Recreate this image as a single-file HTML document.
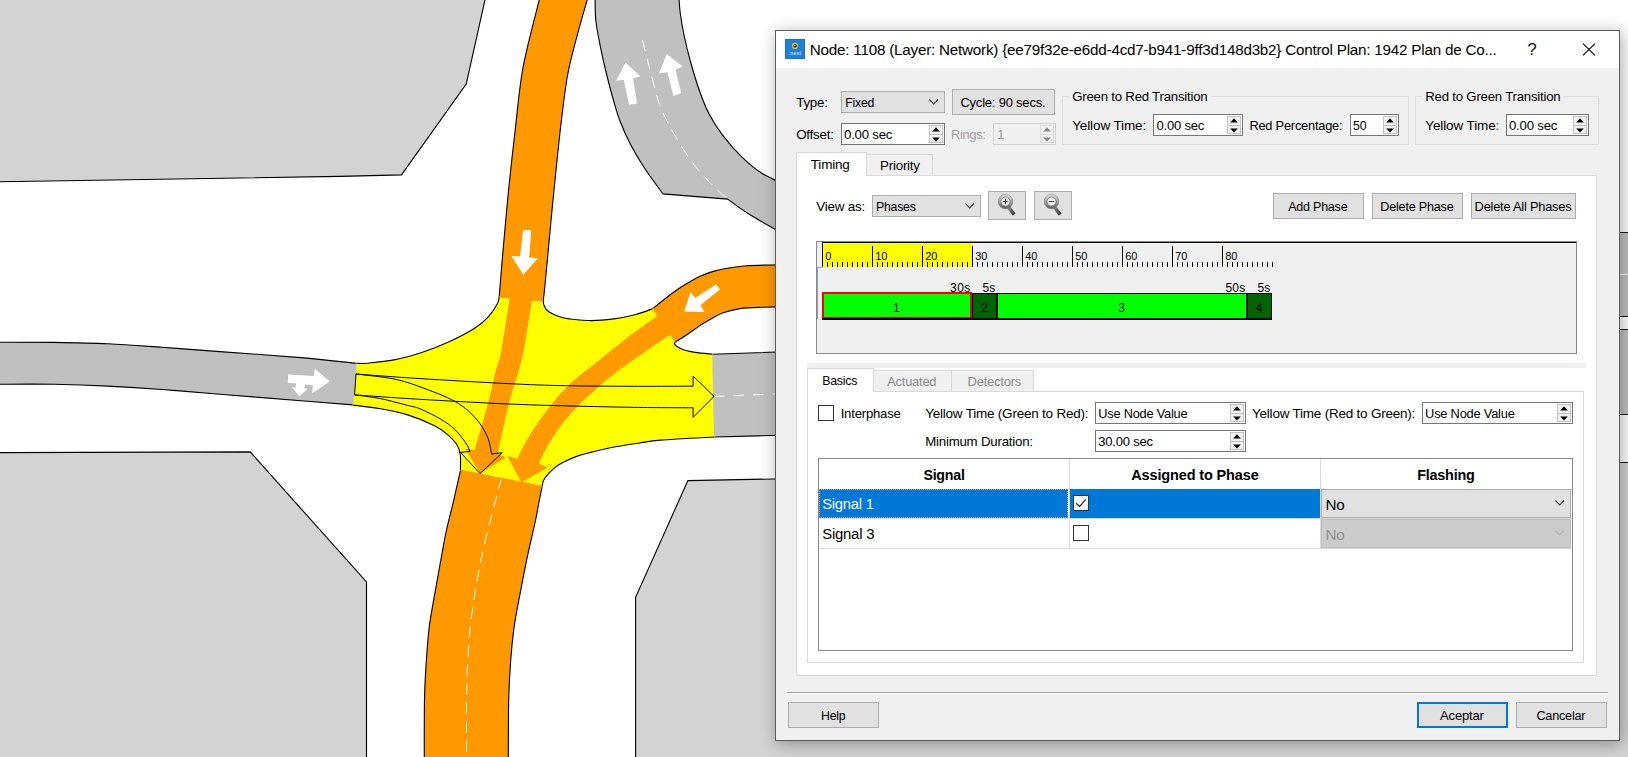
<!DOCTYPE html>
<html><head><meta charset="utf-8"><title>Node 1108 Control Plan</title>
<style>
html,body{margin:0;padding:0;}
body{width:1628px;height:757px;overflow:hidden;position:relative;background:#fff;font-family:"Liberation Sans", sans-serif;}
#map{position:absolute;left:0;top:0;}
#ui div,#ui svg{position:absolute;box-sizing:border-box;}
#ui .t{box-sizing:content-box;}
</style></head>
<body>
<svg id="map" width="1628" height="757" viewBox="0 0 1628 757">
<rect width="1628" height="757" fill="#fff"/>
<path d="M-5,-5 L486,-5 L485.4,-2 L466.2,84.1 L401.5,174.9 L340,176.4 L-5,181.85 Z" fill="#d3d3d3" stroke="#000" stroke-width="1.12"/>
<path d="M-5,452.6 L250.2,451.9 L366.5,582 L366.5,765 L-5,765 Z" fill="#d3d3d3" stroke="#000" stroke-width="1.12"/>
<path d="M687.9,480.6 L800,478.5 L1640,478.5 L1640,760 L635.6,760 L635.6,597.3 Z" fill="#d3d3d3" stroke="#000" stroke-width="1.12"/>
<rect x="1618" y="232.5" width="20" height="84" fill="#c0c0c0"/>
<rect x="1618" y="329.5" width="20" height="85" fill="#c0c0c0"/>
<rect x="1618" y="462.5" width="20" height="300" fill="#d3d3d3"/>
<path d="M1618,232.5h20M1618,316.5h20M1618,329.5h20M1618,414.5h20M1618,462.5h20" stroke="#1a1a1a" stroke-width="1" fill="none"/>
<path d="M1620,274.3h10" stroke="#fff" stroke-width="1" fill="none"/>
<path d="M-5.0,342.2 C4.8,342.2 35.2,342.1 54.0,342.4 C72.8,342.7 90.0,343.0 108.0,343.8 C126.0,344.6 143.3,346.0 162.0,347.3 C180.7,348.6 196.8,349.9 220.0,351.6 C243.2,353.3 278.2,355.7 301.0,357.6 C323.8,359.6 347.2,362.4 356.5,363.3 L353.1,404.9 C344.4,404.2 323.2,402.6 301.0,400.8 C278.8,399.0 243.2,396.1 220.0,394.2 C196.8,392.3 180.7,390.9 162.0,389.5 C143.3,388.1 126.0,387.0 108.0,386.1 C90.0,385.2 72.8,384.6 54.0,384.3 C35.2,384.0 4.8,384.3 -5.0,384.3 Z" fill="#c0c0c0"/>
<path d="M-5.0,342.2 C4.8,342.2 35.2,342.1 54.0,342.4 C72.8,342.7 90.0,343.0 108.0,343.8 C126.0,344.6 143.3,346.0 162.0,347.3 C180.7,348.6 196.8,349.9 220.0,351.6 C243.2,353.3 278.2,355.7 301.0,357.6 C323.8,359.6 347.2,362.4 356.5,363.3" fill="none" stroke="#000" stroke-width="1.12"/>
<path d="M-5.0,384.3 C4.8,384.3 35.2,384.0 54.0,384.3 C72.8,384.6 90.0,385.2 108.0,386.1 C126.0,387.0 143.3,388.1 162.0,389.5 C180.7,390.9 196.8,392.3 220.0,394.2 C243.2,396.1 278.8,399.0 301.0,400.8 C323.2,402.6 344.4,404.2 353.1,404.9" fill="none" stroke="#000" stroke-width="1.12"/>
<path d="M712.7,354.2 C727.2,353.7 785.5,351.7 800.0,351.2 L800.0,434.8 C785.7,435.2 728.7,436.6 714.4,437.0 Z" fill="#c0c0c0"/>
<path d="M712.7,354.2 C727.2,353.7 785.5,351.7 800.0,351.2" fill="none" stroke="#000" stroke-width="1.12"/>
<path d="M714.4,437.0 C728.7,436.6 785.7,435.2 800.0,434.8" fill="none" stroke="#000" stroke-width="1.12"/>
<path d="M714,396.4 L800,393" stroke="#fff" stroke-width="1" stroke-dasharray="10.5 9" fill="none"/>
<path d="M595.1,-3.0 C595.2,0.9 594.9,11.9 595.8,20.3 C596.7,28.7 598.6,37.8 600.5,47.3 C602.4,56.8 605.0,67.9 607.3,77.0 C609.5,86.1 611.9,94.7 614.0,102.0 C616.1,109.3 617.3,114.0 620.0,121.0 C622.7,128.0 626.3,136.3 630.3,144.0 C634.3,151.7 638.4,158.7 643.8,167.0 C649.2,175.3 659.7,189.4 662.9,193.9 L727.7,199.1 C731.8,201.9 740.1,208.7 752.1,216.0 C764.1,223.3 792.0,238.5 800.0,243.0 L800,192 C793.8,189.0 772.3,179.5 762.7,173.8 C753.1,168.1 749.1,164.1 742.4,157.6 C735.6,151.1 727.8,142.0 722.2,134.6 C716.6,127.2 712.4,120.4 708.6,113.0 C704.8,105.6 702.1,98.2 699.2,90.0 C696.3,81.8 693.5,72.4 691.0,63.5 C688.5,54.6 686.1,44.8 684.3,36.5 C682.5,28.2 681.2,20.1 680.3,13.5 C679.4,6.9 679.1,-0.2 678.9,-3.0 Z" fill="#c0c0c0"/>
<path d="M595.1,-3.0 C595.2,0.9 594.9,11.9 595.8,20.3 C596.7,28.7 598.6,37.8 600.5,47.3 C602.4,56.8 605.0,67.9 607.3,77.0 C609.5,86.1 611.9,94.7 614.0,102.0 C616.1,109.3 617.3,114.0 620.0,121.0 C622.7,128.0 626.3,136.3 630.3,144.0 C634.3,151.7 638.4,158.7 643.8,167.0 C649.2,175.3 659.7,189.4 662.9,193.9 L727.7,199.1 C731.8,201.9 740.1,208.7 752.1,216.0 C764.1,223.3 792.0,238.5 800.0,243.0" fill="none" stroke="#000" stroke-width="1.12"/>
<path d="M678.9,-3.0 C679.1,-0.2 679.4,6.9 680.3,13.5 C681.2,20.1 682.5,28.2 684.3,36.5 C686.1,44.8 688.5,54.6 691.0,63.5 C693.5,72.4 696.3,81.8 699.2,90.0 C702.1,98.2 704.8,105.6 708.6,113.0 C712.4,120.4 716.6,127.2 722.2,134.6 C727.8,142.0 735.6,151.1 742.4,157.6 C749.1,164.1 753.1,168.1 762.7,173.8 C772.3,179.5 793.8,189.0 800.0,192.0" fill="none" stroke="#000" stroke-width="1.12"/>
<path d="M642.4,39.9 C643.7,44.9 647.3,59.6 650.0,70.0 C652.7,80.3 655.8,93.5 658.6,102.0 C661.4,110.5 663.5,114.1 667.0,121.0 C670.5,127.9 674.8,135.7 679.6,143.4 C684.4,151.1 689.5,159.2 695.8,167.0 C702.1,174.8 712.2,184.9 717.4,190.0 C722.6,195.1 725.4,196.3 727.0,197.6" fill="none" stroke="#fff" stroke-width="1" stroke-dasharray="11.5 7.5"/>
<path d="M540.0,-3.0 C537.2,8.6 527.2,45.1 523.2,66.5 C519.2,87.9 518.1,104.9 515.7,125.5 C513.3,146.1 510.7,169.1 508.6,190.0 C506.5,210.9 504.6,233.2 503.0,251.0 C501.4,268.8 499.8,289.3 499.2,297.0 L543.2,301.0 C543.5,298.3 543.8,297.5 545.0,285.0 C546.2,272.5 549.0,241.8 550.5,226.0 C552.0,210.2 552.3,206.8 554.0,190.0 C555.7,173.2 558.5,144.7 560.8,125.5 C563.1,106.3 564.8,90.3 567.6,75.0 C570.4,59.7 574.2,46.8 577.6,33.8 C581.0,20.8 586.3,3.1 588.0,-3.0 Z" fill="#ff9900"/>
<path d="M540.0,-3.0 C537.2,8.6 527.2,45.1 523.2,66.5 C519.2,87.9 518.1,104.9 515.7,125.5 C513.3,146.1 510.7,169.1 508.6,190.0 C506.5,210.9 504.6,233.2 503.0,251.0 C501.4,268.8 499.8,289.3 499.2,297.0" fill="none" stroke="#000" stroke-width="1.12"/>
<path d="M588.0,-3.0 C586.3,3.1 581.0,20.8 577.6,33.8 C574.2,46.8 570.4,59.7 567.6,75.0 C564.8,90.3 563.1,106.3 560.8,125.5 C558.5,144.7 555.7,173.2 554.0,190.0 C552.3,206.8 552.0,210.2 550.5,226.0 C549.0,241.8 546.2,272.5 545.0,285.0 C543.8,297.5 543.5,298.3 543.2,301.0" fill="none" stroke="#000" stroke-width="1.12"/>
<path d="M652.8,308.6 C654.6,307.1 660.0,302.7 663.8,299.7 C667.6,296.7 671.7,293.6 675.7,290.8 C679.7,288.0 683.6,285.5 687.6,283.1 C691.6,280.7 694.8,278.6 699.5,276.5 C704.2,274.4 708.3,272.4 716.1,270.6 C723.9,268.8 732.4,266.8 746.4,265.8 C760.4,264.8 791.1,264.8 800.0,264.6 L800.0,306.6 C793.3,306.7 770.0,307.0 760.0,307.3 C750.0,307.6 746.1,307.7 740.0,308.6 C733.9,309.5 728.0,311.1 723.2,312.8 C718.4,314.5 715.2,316.6 711.3,318.8 C707.3,321.0 703.5,323.3 699.5,325.9 C695.5,328.5 691.6,331.5 687.6,334.2 C683.6,336.9 677.6,340.6 675.6,341.9 Z" fill="#ff9900"/>
<path d="M652.8,308.6 C654.6,307.1 660.0,302.7 663.8,299.7 C667.6,296.7 671.7,293.6 675.7,290.8 C679.7,288.0 683.6,285.5 687.6,283.1 C691.6,280.7 694.8,278.6 699.5,276.5 C704.2,274.4 708.3,272.4 716.1,270.6 C723.9,268.8 732.4,266.8 746.4,265.8 C760.4,264.8 791.1,264.8 800.0,264.6" fill="none" stroke="#000" stroke-width="1.12"/>
<path d="M675.6,341.9 C677.6,340.6 683.6,336.9 687.6,334.2 C691.6,331.5 695.5,328.5 699.5,325.9 C703.5,323.3 707.3,321.0 711.3,318.8 C715.2,316.6 718.4,314.5 723.2,312.8 C728.0,311.1 733.9,309.5 740.0,308.6 C746.1,307.7 750.0,307.6 760.0,307.3 C770.0,307.0 793.3,306.7 800.0,306.6" fill="none" stroke="#000" stroke-width="1.12"/>
<path d="M460.5,470.3 C459.3,475.6 455.6,492.1 453.3,502.0 C451.0,511.9 448.4,521.5 446.5,530.0 C444.6,538.5 443.9,543.2 442.1,553.2 C440.3,563.2 437.6,577.6 435.5,589.8 C433.4,602.0 430.9,614.2 429.3,626.4 C427.8,638.6 427.0,650.8 426.2,663.0 C425.4,675.2 424.8,683.4 424.5,699.6 C424.2,715.8 424.3,749.9 424.3,760.0 L508.3,760.0 C508.4,749.9 508.3,715.8 508.7,699.6 C509.1,683.4 509.6,675.2 510.5,663.0 C511.4,650.8 512.5,638.6 514.2,626.4 C515.9,614.2 518.5,602.0 520.8,589.8 C523.1,577.6 525.6,564.8 528.1,553.2 C530.6,541.6 533.8,528.5 535.6,520.0 C537.4,511.5 537.9,507.6 539.0,502.0 C540.1,496.4 541.6,489.1 542.1,486.5 Z" fill="#ff9900"/>
<path d="M460.5,470.3 C459.3,475.6 455.6,492.1 453.3,502.0 C451.0,511.9 448.4,521.5 446.5,530.0 C444.6,538.5 443.9,543.2 442.1,553.2 C440.3,563.2 437.6,577.6 435.5,589.8 C433.4,602.0 430.9,614.2 429.3,626.4 C427.8,638.6 427.0,650.8 426.2,663.0 C425.4,675.2 424.8,683.4 424.5,699.6 C424.2,715.8 424.3,749.9 424.3,760.0" fill="none" stroke="#000" stroke-width="1.12"/>
<path d="M542.1,486.5 C541.6,489.1 540.1,496.4 539.0,502.0 C537.9,507.6 537.4,511.5 535.6,520.0 C533.8,528.5 530.6,541.6 528.1,553.2 C525.6,564.8 523.1,577.6 520.8,589.8 C518.5,602.0 515.9,614.2 514.2,626.4 C512.5,638.6 511.4,650.8 510.5,663.0 C509.6,675.2 509.1,683.4 508.7,699.6 C508.3,715.8 508.4,749.9 508.3,760.0" fill="none" stroke="#000" stroke-width="1.12"/>
<path d="M501.5,477.7 C499.8,484.1 494.7,503.4 491.5,516.0 C488.3,528.6 485.1,540.9 482.4,553.2 C479.7,565.5 477.5,577.8 475.5,590.0 C473.5,602.2 471.6,614.2 470.3,626.4 C469.0,638.6 468.2,650.7 467.6,663.0 C467.0,675.3 466.8,683.8 466.6,700.0 C466.4,716.2 466.6,750.0 466.6,760.0" fill="none" stroke="#fff" stroke-width="1" stroke-dasharray="11.5 7.5"/>
<path d="M356.5,363.3 C358.2,363.3 360.8,363.8 367.0,363.2 C373.2,362.6 385.0,361.6 394.0,359.9 C403.0,358.2 412.0,355.7 421.0,352.8 C430.0,349.9 439.0,346.4 448.0,342.3 C457.0,338.2 468.2,332.3 475.0,328.0 C481.8,323.7 484.9,320.6 488.6,316.6 C492.3,312.6 495.6,307.1 497.4,303.8 C499.2,300.5 498.9,298.1 499.2,297.0 L543.2,301.0 C543.3,301.7 543.3,303.5 543.9,305.0 C544.5,306.5 545.4,308.6 546.8,310.0 C548.1,311.4 549.8,312.4 552.0,313.5 C554.2,314.6 557.1,315.9 560.0,316.8 C562.9,317.7 564.2,318.3 569.5,318.9 C574.8,319.5 584.2,320.6 591.6,320.6 C599.0,320.6 606.3,319.9 613.7,318.9 C621.1,317.9 629.3,316.2 635.8,314.5 C642.3,312.8 650.0,309.6 652.8,308.6 L675.6,341.7 C675.4,342.1 673.6,343.1 674.6,344.3 C675.6,345.5 678.2,347.6 681.6,349.0 C685.0,350.4 689.9,351.5 695.1,352.4 C700.3,353.3 709.8,353.9 712.7,354.2 L714.4,437.0 C705.4,437.5 672.9,439.1 660.5,440.1 C648.1,441.1 648.5,441.7 640.0,443.0 C631.5,444.3 617.1,446.5 609.2,448.0 C601.3,449.5 597.6,450.6 592.5,451.9 C587.4,453.2 583.2,454.0 578.6,455.6 C574.0,457.2 568.6,459.7 564.8,461.6 C560.9,463.5 558.3,465.0 555.5,467.1 C552.7,469.2 550.1,471.9 548.1,474.1 C546.1,476.3 544.5,478.4 543.5,480.5 C542.5,482.6 542.3,485.5 542.1,486.5 L460.5,470.3 C460.4,467.6 460.9,458.4 460.2,454.0 C459.5,449.6 458.5,447.1 456.5,444.0 C454.5,440.9 451.8,438.2 448.1,435.1 C444.5,432.1 441.4,429.1 434.6,425.7 C427.9,422.3 416.6,417.7 407.6,414.9 C398.6,412.1 389.6,410.4 380.5,408.8 C371.4,407.2 357.7,405.7 353.1,405.1 Z" fill="#ffff00"/>
<path d="M356.5,363.3 C358.2,363.3 360.8,363.8 367.0,363.2 C373.2,362.6 385.0,361.6 394.0,359.9 C403.0,358.2 412.0,355.7 421.0,352.8 C430.0,349.9 439.0,346.4 448.0,342.3 C457.0,338.2 468.2,332.3 475.0,328.0 C481.8,323.7 484.9,320.6 488.6,316.6 C492.3,312.6 495.6,307.1 497.4,303.8 C499.2,300.5 498.9,298.1 499.2,297.0" fill="none" stroke="#000" stroke-width="1.12"/>
<path d="M543.2,301.0 C543.3,301.7 543.3,303.5 543.9,305.0 C544.5,306.5 545.4,308.6 546.8,310.0 C548.1,311.4 549.8,312.4 552.0,313.5 C554.2,314.6 557.1,315.9 560.0,316.8 C562.9,317.7 564.2,318.3 569.5,318.9 C574.8,319.5 584.2,320.6 591.6,320.6 C599.0,320.6 606.3,319.9 613.7,318.9 C621.1,317.9 629.3,316.2 635.8,314.5 C642.3,312.8 650.0,309.6 652.8,308.6" fill="none" stroke="#000" stroke-width="1.12"/>
<path d="M675.6,341.7 C675.4,342.1 673.6,343.1 674.6,344.3 C675.6,345.5 678.2,347.6 681.6,349.0 C685.0,350.4 689.9,351.5 695.1,352.4 C700.3,353.3 709.8,353.9 712.7,354.2" fill="none" stroke="#000" stroke-width="1.12"/>
<path d="M714.4,437.0 C705.4,437.5 672.9,439.1 660.5,440.1 C648.1,441.1 648.5,441.7 640.0,443.0 C631.5,444.3 617.1,446.5 609.2,448.0 C601.3,449.5 597.6,450.6 592.5,451.9 C587.4,453.2 583.2,454.0 578.6,455.6 C574.0,457.2 568.6,459.7 564.8,461.6 C560.9,463.5 558.3,465.0 555.5,467.1 C552.7,469.2 550.1,471.9 548.1,474.1 C546.1,476.3 544.5,478.4 543.5,480.5 C542.5,482.6 542.3,485.5 542.1,486.5" fill="none" stroke="#000" stroke-width="1.12"/>
<path d="M460.5,470.3 C460.4,467.6 460.9,458.4 460.2,454.0 C459.5,449.6 458.5,447.1 456.5,444.0 C454.5,440.9 451.8,438.2 448.1,435.1 C444.5,432.1 441.4,429.1 434.6,425.7 C427.9,422.3 416.6,417.7 407.6,414.9 C398.6,412.1 389.6,410.4 380.5,408.8 C371.4,407.2 357.7,405.7 353.1,405.1" fill="none" stroke="#000" stroke-width="1.12"/>
<path d="M499.4,296.6 L543,300.6 M653,308.4 L675.4,341.5 M460.7,470.5 L541.9,486.6" stroke="#ff9900" stroke-width="1.6" fill="none"/>
<path d="M356.2,363.6 L352.9,404.7 M712.9,354.5 L714.6,436.7" stroke="#c0c0c0" stroke-width="1.4" fill="none"/>
<path d="M509.9,296.5 C508.5,305.4 503.9,337.4 501.5,350.0 C499.1,362.6 497.5,363.7 495.4,372.0 C493.3,380.3 492.3,387.0 488.9,400.0 C485.4,413.0 477.1,441.7 474.7,450.0 L465.3,448.6 L480.1,473.6 L505.8,457.4 L497.7,453.4 C499.7,444.5 506.4,413.6 509.9,400.0 C513.4,386.4 516.1,380.3 518.4,372.0 C520.7,363.7 521.5,362.2 523.8,350.0 C526.1,337.8 530.8,307.5 532.2,299.0 Z" fill="#ff9900"/>
<path d="M658.8,314.8 C653.6,318.6 637.3,330.2 627.6,337.6 C617.9,345.0 609.5,352.0 600.5,359.2 C591.5,366.4 581.1,374.0 573.5,380.8 C565.9,387.6 560.4,393.9 555.1,400.0 C549.8,406.1 546.1,411.3 541.6,417.6 C537.1,423.9 532.2,430.9 528.1,437.8 C524.0,444.7 519.1,455.3 517.3,458.8 L507.2,456.1 L521.4,482.4 L547.7,467.6 L538.9,463.5 C540.5,460.4 544.6,451.1 548.4,444.6 C552.2,438.1 556.6,431.1 561.9,424.3 C567.2,417.5 571.6,412.2 580.3,403.8 C589.0,395.4 598.8,385.7 614.0,374.0 C629.2,362.3 661.8,340.5 671.3,333.8 Z" fill="#ff9900"/>
<path d="M523.1,229.9 L531.2,230.3 L529.2,257.4 L537.9,258.2 L523.3,274.7 L511.3,256.1 L520.1,256.5 Z" fill="#fff"/>
<path d="M684.2,311.4 L690.5,292 L695.3,297.9 L716.1,284.3 L719.9,289.6 L700.6,305.1 L704.4,311.9 Z" fill="#fff"/>
<path d="M625.5,62.4 L640.4,76.4 L633,78.1 L637,103.5 L628.9,104.8 L623.9,79.7 L616.1,80.8 Z" fill="#fff"/>
<path d="M666.8,54.1 L682.7,66.6 L675.5,69.6 L681.2,93.2 L673.5,95.9 L667.4,72.3 L658.9,73.4 Z" fill="#fff"/>
<path d="M288.2,374.4 L313.7,376.1 L314.9,368.8 L329.8,381.6 L312.1,393.3 L312.9,385.2 L304.9,384.4 L304.3,388.3 L307.6,388.8 L299.3,396.6 L292.1,387.2 L295.7,387.5 L296,383.6 L287.7,382.7 Z" fill="#fff"/>
<path d="M356.0,374.0 C366.7,374.8 396.0,377.1 420.0,378.6 C444.0,380.1 476.7,382.0 500.0,383.2 C523.3,384.4 538.3,385.1 560.0,385.6 C581.7,386.1 607.8,386.2 630.0,386.3 C652.2,386.4 682.6,386.2 693.1,386.2 L693.1,376.1 L714,396.4 L693.1,417.3 L693.1,407.8 C682.6,407.7 652.2,407.7 630.0,407.3 C607.8,406.9 581.7,406.3 560.0,405.7 C538.3,405.1 523.3,404.7 500.0,403.6 C476.7,402.5 444.2,400.8 420.0,399.3 C395.8,397.9 365.5,395.6 354.6,394.9 Z" fill="none" stroke="#000" stroke-width="1"/>
<path d="M356.0,374.0 C362.3,374.8 383.2,376.8 394.0,379.0 C404.8,381.2 410.9,383.5 421.0,387.2 C431.1,390.9 445.9,396.3 454.9,401.4 C463.9,406.5 469.7,411.8 475.1,417.6 C480.5,423.5 484.6,430.4 487.3,436.5 C490.1,442.6 490.9,451.1 491.6,454.0 L502.2,452.7 L480.1,473.6 L460.5,452.4 L470,451.4 C469.3,450.0 468.4,446.8 465.9,443.2 C463.4,439.6 459.4,433.8 455.1,429.7 C450.8,425.6 446.2,422.4 440.3,418.9 C434.4,415.4 425.4,411.1 420.0,408.8 C414.6,406.6 414.2,407.1 407.6,405.4 C401.0,403.7 389.3,400.4 380.5,398.6 C371.7,396.9 358.9,395.5 354.6,394.9" fill="none" stroke="#000" stroke-width="1"/>
</svg>
<div id="ui">
<div style="left:775px;top:30px;width:845px;height:711px;background:#f0f0f0;border:1px solid #5c5c5c;box-shadow:1.5px 3px 16px 0 rgba(0,0,0,.33);"></div>
<div style="left:776px;top:31px;width:843px;height:37px;background:#fff;"></div>
<div style="left:785px;top:39px;width:20px;height:20px;background:#2080d8;border:1px solid #0f74d4;"></div>
<svg style="left:785px;top:39px;" width="20" height="20" viewBox="0 0 20 20"><circle cx="10" cy="6.9" r="3.1" fill="#f5b800"/><circle cx="10.1" cy="7" r="1.8" fill="#1a2f6a"/><circle cx="9.7" cy="6.6" r=".8" fill="#b9d4f2"/></svg>
<div class="t" style="left:788.6px;top:48.00px;font-size:5.4px;line-height:10px;color:#e4eefa;white-space:nowrap;letter-spacing:0.178px;">.next</div>
<div class="t" style="left:809.8px;top:39.00px;font-size:15.23px;line-height:21px;color:#000;white-space:nowrap;letter-spacing:-0.22px;">Node: 1108 (Layer: Network) {ee79f32e-e6dd-4cd7-b941-9ff3d148d3b2} Control Plan: 1942 Plan de Co...</div>
<div class="t" style="left:1382px;width:300px;text-align:center;top:38.00px;font-size:17px;line-height:23px;color:#151515;white-space:nowrap;">?</div>
<svg style="left:1582px;top:42.5px;" width="14" height="13" viewBox="0 0 14 13"><path d="M1,0.7 L13,12.3 M13,0.7 L1,12.3" stroke="#000" stroke-width="1.1" fill="none"/></svg>
<div class="t" style="left:796.2px;top:93.00px;font-size:13.36px;line-height:19px;color:#000;white-space:nowrap;letter-spacing:-0.22px;">Type:</div>
<div style="left:841px;top:91px;width:104px;height:22px;background:#e1e1e1;border:1px solid #adadad;"></div>
<div class="t" style="left:845.2px;top:94.00px;font-size:12.3px;line-height:18px;color:#000;white-space:nowrap;letter-spacing:-0.22px;">Fixed</div>
<svg style="left:928.8px;top:99.1px;" width="10" height="6" viewBox="0 0 10 6"><path d="M0.4,0.5 L4.7,4.9 L9,0.5" fill="none" stroke="#444" stroke-width="1.1"/></svg>
<div style="left:952px;top:89px;width:103px;height:26px;background:#e1e1e1;border:1px solid #adadad;"></div>
<div class="t" style="left:960.4px;top:93.00px;font-size:13px;line-height:19px;color:#000;white-space:nowrap;letter-spacing:-0.211px;">Cycle: 90 secs.</div>
<div class="t" style="left:796.2px;top:125.00px;font-size:13.36px;line-height:19px;color:#000;white-space:nowrap;letter-spacing:-0.22px;">Offset:</div>
<div style="left:841px;top:123px;width:104px;height:22px;background:#fff;border:1px solid #767676;"></div>
<div class="t" style="left:844px;top:125.00px;font-size:13.23px;line-height:19px;color:#000;white-space:nowrap;letter-spacing:-0.22px;">0.00 sec</div>
<div style="left:929px;top:125px;width:14px;height:18px;background:#f0f0f0;border:1px solid #c3c3c3;"></div>
<div style="left:929px;top:133.5px;width:14px;height:1px;background:#c3c3c3;"></div>
<svg style="left:931.6px;top:127.3px;" width="8" height="5" viewBox="0 0 8 5"><path d="M0.2,4.4 L4,0.3 L7.8,4.4 Z" fill="#000"/></svg>
<svg style="left:931.6px;top:136.6px;" width="8" height="5" viewBox="0 0 8 5"><path d="M0.2,0.4 L4,4.5 L7.8,0.4 Z" fill="#000"/></svg>
<div class="t" style="left:951px;top:126.00px;font-size:12.7px;line-height:18px;color:#9d9d9d;white-space:nowrap;letter-spacing:-0.22px;">Rings:</div>
<div style="left:993px;top:123px;width:63px;height:22px;background:#f0f0f0;border:1px solid #d4d4d4;"></div>
<div class="t" style="left:997px;top:125.00px;font-size:13.5px;line-height:19px;color:#9d9d9d;white-space:nowrap;">1</div>
<div style="left:1040px;top:125px;width:14px;height:18px;background:#f0f0f0;border:1px solid #dcdcdc;"></div>
<div style="left:1040px;top:133.5px;width:14px;height:1px;background:#dcdcdc;"></div>
<svg style="left:1042.6px;top:127.3px;" width="8" height="5" viewBox="0 0 8 5"><path d="M0.2,4.4 L4,0.3 L7.8,4.4 Z" fill="#858585"/></svg>
<svg style="left:1042.6px;top:136.6px;" width="8" height="5" viewBox="0 0 8 5"><path d="M0.2,0.4 L4,4.5 L7.8,0.4 Z" fill="#858585"/></svg>
<div style="left:1062px;top:96px;width:347px;height:49px;border:1px solid #dcdcdc;"></div>
<div style="left:1069.2px;top:88px;width:141.5px;height:16px;background:#f0f0f0;"></div>
<div class="t" style="left:1072.2px;top:87.00px;font-size:13.22px;line-height:19px;color:#000;white-space:nowrap;letter-spacing:-0.22px;">Green to Red Transition</div>
<div class="t" style="left:1072.2px;top:116.00px;font-size:13.5px;line-height:19px;color:#000;white-space:nowrap;letter-spacing:-0.118px;">Yellow Time:</div>
<div style="left:1153px;top:114px;width:90px;height:22px;background:#fff;border:1px solid #767676;"></div>
<div class="t" style="left:1156.5px;top:116.00px;font-size:13.05px;line-height:19px;color:#000;white-space:nowrap;letter-spacing:-0.22px;">0.00 sec</div>
<div style="left:1227px;top:116px;width:14px;height:18px;background:#f0f0f0;border:1px solid #c3c3c3;"></div>
<div style="left:1227px;top:124.5px;width:14px;height:1px;background:#c3c3c3;"></div>
<svg style="left:1229.6px;top:118.3px;" width="8" height="5" viewBox="0 0 8 5"><path d="M0.2,4.4 L4,0.3 L7.8,4.4 Z" fill="#000"/></svg>
<svg style="left:1229.6px;top:127.6px;" width="8" height="5" viewBox="0 0 8 5"><path d="M0.2,0.4 L4,4.5 L7.8,0.4 Z" fill="#000"/></svg>
<div class="t" style="left:1249.4px;top:116.00px;font-size:12.84px;line-height:19px;color:#000;white-space:nowrap;letter-spacing:-0.22px;">Red Percentage:</div>
<div style="left:1350px;top:114px;width:49px;height:22px;background:#fff;border:1px solid #767676;"></div>
<div class="t" style="left:1353px;top:117.00px;font-size:12.32px;line-height:18px;color:#000;white-space:nowrap;letter-spacing:-0.22px;">50</div>
<div style="left:1383px;top:116px;width:14px;height:18px;background:#f0f0f0;border:1px solid #c3c3c3;"></div>
<div style="left:1383px;top:124.5px;width:14px;height:1px;background:#c3c3c3;"></div>
<svg style="left:1385.6px;top:118.3px;" width="8" height="5" viewBox="0 0 8 5"><path d="M0.2,4.4 L4,0.3 L7.8,4.4 Z" fill="#000"/></svg>
<svg style="left:1385.6px;top:127.6px;" width="8" height="5" viewBox="0 0 8 5"><path d="M0.2,0.4 L4,4.5 L7.8,0.4 Z" fill="#000"/></svg>
<div style="left:1415px;top:96px;width:184px;height:49px;border:1px solid #dcdcdc;"></div>
<div style="left:1422.3px;top:88px;width:141.4px;height:16px;background:#f0f0f0;"></div>
<div class="t" style="left:1425.3px;top:87.00px;font-size:13.21px;line-height:19px;color:#000;white-space:nowrap;letter-spacing:-0.22px;">Red to Green Transition</div>
<div class="t" style="left:1425.3px;top:116.00px;font-size:13.5px;line-height:19px;color:#000;white-space:nowrap;letter-spacing:-0.118px;">Yellow Time:</div>
<div style="left:1506px;top:114px;width:83px;height:22px;background:#fff;border:1px solid #767676;"></div>
<div class="t" style="left:1509px;top:116.00px;font-size:13.21px;line-height:19px;color:#000;white-space:nowrap;letter-spacing:-0.22px;">0.00 sec</div>
<div style="left:1573px;top:116px;width:14px;height:18px;background:#f0f0f0;border:1px solid #c3c3c3;"></div>
<div style="left:1573px;top:124.5px;width:14px;height:1px;background:#c3c3c3;"></div>
<svg style="left:1575.6px;top:118.3px;" width="8" height="5" viewBox="0 0 8 5"><path d="M0.2,4.4 L4,0.3 L7.8,4.4 Z" fill="#000"/></svg>
<svg style="left:1575.6px;top:127.6px;" width="8" height="5" viewBox="0 0 8 5"><path d="M0.2,0.4 L4,4.5 L7.8,0.4 Z" fill="#000"/></svg>
<div style="left:796px;top:175px;width:801px;height:501px;background:#fff;border:1px solid #d9d9d9;"></div>
<div style="left:866px;top:154px;width:67px;height:22px;background:#f0f0f0;border:1px solid #d9d9d9;"></div>
<div style="left:796px;top:152px;width:71px;height:24px;background:#fff;border:1px solid #d9d9d9;border-bottom:none;"></div>
<div class="t" style="left:810.8px;top:155.00px;font-size:13.5px;line-height:19px;color:#000;white-space:nowrap;letter-spacing:-0.203px;">Timing</div>
<div class="t" style="left:880.1px;top:156.00px;font-size:13.32px;line-height:19px;color:#000;white-space:nowrap;letter-spacing:-0.22px;">Priority</div>
<div class="t" style="left:816.2px;top:197.00px;font-size:13.44px;line-height:19px;color:#000;white-space:nowrap;letter-spacing:-0.22px;">View as:</div>
<div style="left:872px;top:195px;width:109px;height:22px;background:#e1e1e1;border:1px solid #adadad;"></div>
<div class="t" style="left:876px;top:198.00px;font-size:12.29px;line-height:18px;color:#000;white-space:nowrap;letter-spacing:-0.22px;">Phases</div>
<svg style="left:964.8px;top:203.1px;" width="10" height="6" viewBox="0 0 10 6"><path d="M0.4,0.5 L4.7,4.9 L9,0.5" fill="none" stroke="#444" stroke-width="1.1"/></svg>
<div style="left:988px;top:191px;width:38px;height:29px;background:#e1e1e1;border:1px solid #adadad;"></div>
<div style="left:1034px;top:191px;width:38px;height:29px;background:#e1e1e1;border:1px solid #adadad;"></div>
<svg style="left:995.0px;top:191.0px;" width="26" height="26" viewBox="0 0 26 26"><defs><linearGradient id="rga" x1="0" y1="0" x2="0" y2="1"><stop offset="0" stop-color="#d6d6d6"/><stop offset="1" stop-color="#6a6a6a"/></linearGradient><linearGradient id="hga" x1="0" y1="0" x2="1" y2="1"><stop offset="0" stop-color="#8c8c8c"/><stop offset="1" stop-color="#383838"/></linearGradient></defs><path d="M13.2,15.8 L19.2,23.6" stroke="url(#hga)" stroke-width="3.5" fill="none"/><circle cx="10.5" cy="10.5" r="6" fill="#efefef" stroke="url(#rga)" stroke-width="2.9"/><circle cx="10.5" cy="10.5" r="7.3" fill="none" stroke="#7e7e7e" stroke-width=".6" opacity=".8"/><circle cx="10.5" cy="10.5" r="4.5" fill="none" stroke="#6f6f6f" stroke-width=".7"/><path d="M7.8,10.5 H13.2" stroke="#3c3c3c" stroke-width="1"/><path d="M10.5,7.8 V13.2" stroke="#3c3c3c" stroke-width="1"/></svg>
<svg style="left:1041.0px;top:191.0px;" width="26" height="26" viewBox="0 0 26 26"><defs><linearGradient id="rgb" x1="0" y1="0" x2="0" y2="1"><stop offset="0" stop-color="#d6d6d6"/><stop offset="1" stop-color="#6a6a6a"/></linearGradient><linearGradient id="hgb" x1="0" y1="0" x2="1" y2="1"><stop offset="0" stop-color="#8c8c8c"/><stop offset="1" stop-color="#383838"/></linearGradient></defs><path d="M13.2,15.8 L19.2,23.6" stroke="url(#hgb)" stroke-width="3.5" fill="none"/><circle cx="10.5" cy="10.5" r="6" fill="#efefef" stroke="url(#rgb)" stroke-width="2.9"/><circle cx="10.5" cy="10.5" r="7.3" fill="none" stroke="#7e7e7e" stroke-width=".6" opacity=".8"/><circle cx="10.5" cy="10.5" r="4.5" fill="none" stroke="#6f6f6f" stroke-width=".7"/><path d="M7.8,10.5 H13.2" stroke="#3c3c3c" stroke-width="1"/></svg>
<div style="left:1273px;top:193px;width:91px;height:26px;background:#e1e1e1;border:1px solid #adadad;"></div>
<div class="t" style="left:1288.2px;top:198.00px;font-size:12.5px;line-height:18px;color:#000;white-space:nowrap;letter-spacing:-0.22px;">Add Phase</div>
<div style="left:1372px;top:193px;width:91px;height:26px;background:#e1e1e1;border:1px solid #adadad;"></div>
<div class="t" style="left:1380.3px;top:198.00px;font-size:12.64px;line-height:18px;color:#000;white-space:nowrap;letter-spacing:-0.22px;">Delete Phase</div>
<div style="left:1471px;top:193px;width:105px;height:26px;background:#e1e1e1;border:1px solid #adadad;"></div>
<div class="t" style="left:1474.6px;top:197.00px;font-size:12.84px;line-height:19px;color:#000;white-space:nowrap;letter-spacing:-0.22px;">Delete All Phases</div>
<div style="left:816px;top:241px;width:761px;height:113px;background:#f0f0f0;border:1px solid #828790;"></div>
<div style="left:817px;top:268px;width:1px;height:51px;background:#9a9fa8;"></div>
<div style="left:817px;top:267px;width:5px;height:1px;background:#9a9fa8;"></div>
<div style="left:822px;top:242px;width:754px;height:1px;background:#000;"></div>
<div style="left:822px;top:243px;width:151px;height:24px;background:#ffff00;"></div>
<svg style="left:822px;top:243px;" width="460" height="26" viewBox="0 0 460 26"><path d="M0.5,0V24M5.5,19V24M10.5,19V24M15.5,19V24M20.5,19V24M25.5,19V24M30.5,19V24M35.5,19V24M40.5,19V24M45.5,19V24M50.5,3V24M55.5,19V24M60.5,19V24M65.5,19V24M70.5,19V24M75.5,19V24M80.5,19V24M85.5,19V24M90.5,19V24M95.5,19V24M100.5,3V24M105.5,19V24M110.5,19V24M115.5,19V24M120.5,19V24M125.5,19V24M130.5,19V24M135.5,19V24M140.5,19V24M145.5,19V24M150.5,3V24M155.5,19V24M160.5,19V24M165.5,19V24M170.5,19V24M175.5,19V24M180.5,19V24M185.5,19V24M190.5,19V24M195.5,19V24M200.5,3V24M205.5,19V24M210.5,19V24M215.5,19V24M220.5,19V24M225.5,19V24M230.5,19V24M235.5,19V24M240.5,19V24M245.5,19V24M250.5,3V24M255.5,19V24M260.5,19V24M265.5,19V24M270.5,19V24M275.5,19V24M280.5,19V24M285.5,19V24M290.5,19V24M295.5,19V24M300.5,3V24M305.5,19V24M310.5,19V24M315.5,19V24M320.5,19V24M325.5,19V24M330.5,19V24M335.5,19V24M340.5,19V24M345.5,19V24M350.5,3V24M355.5,19V24M360.5,19V24M365.5,19V24M370.5,19V24M375.5,19V24M380.5,19V24M385.5,19V24M390.5,19V24M395.5,19V24M400.5,3V24M405.5,19V24M410.5,19V24M415.5,19V24M420.5,19V24M425.5,19V24M430.5,19V24M435.5,19V24M440.5,19V24M445.5,19V24M450.5,19V24" stroke="#000" stroke-width="1" fill="none"/></svg>
<div class="t" style="left:825.2px;top:248.00px;font-size:11px;line-height:16px;color:#000;white-space:nowrap;">0</div>
<div class="t" style="left:875.2px;top:248.00px;font-size:11px;line-height:16px;color:#000;white-space:nowrap;">10</div>
<div class="t" style="left:925.2px;top:248.00px;font-size:11px;line-height:16px;color:#000;white-space:nowrap;">20</div>
<div class="t" style="left:975.2px;top:248.00px;font-size:11px;line-height:16px;color:#000;white-space:nowrap;">30</div>
<div class="t" style="left:1025.2px;top:248.00px;font-size:11px;line-height:16px;color:#000;white-space:nowrap;">40</div>
<div class="t" style="left:1075.2px;top:248.00px;font-size:11px;line-height:16px;color:#000;white-space:nowrap;">50</div>
<div class="t" style="left:1125.2px;top:248.00px;font-size:11px;line-height:16px;color:#000;white-space:nowrap;">60</div>
<div class="t" style="left:1175.2px;top:248.00px;font-size:11px;line-height:16px;color:#000;white-space:nowrap;">70</div>
<div class="t" style="left:1225.2px;top:248.00px;font-size:11px;line-height:16px;color:#000;white-space:nowrap;">80</div>
<div style="left:972px;top:293px;width:300px;height:27px;background:#000;"></div>
<div style="left:822px;top:292px;width:150px;height:27px;background:#00ff00;border:2px solid #ff0000;"></div>
<div style="left:822px;top:318px;width:450px;height:2px;background:#000;"></div>
<div style="left:973px;top:294px;width:23px;height:24px;background:#006400;"></div>
<div style="left:998px;top:294px;width:248px;height:24px;background:#00ff00;"></div>
<div style="left:1248px;top:294px;width:23px;height:24px;background:#006400;"></div>
<div class="t" style="left:950.1px;top:279.00px;font-size:12px;line-height:18px;color:#000;white-space:nowrap;letter-spacing:0.42px;">30s</div>
<div class="t" style="left:982.6px;top:279.00px;font-size:12px;line-height:18px;color:#000;white-space:nowrap;letter-spacing:0.012px;">5s</div>
<div class="t" style="left:1225.5px;top:279.00px;font-size:12px;line-height:18px;color:#000;white-space:nowrap;letter-spacing:0.17px;">50s</div>
<div class="t" style="left:1257.4px;top:279.00px;font-size:12px;line-height:18px;color:#000;white-space:nowrap;letter-spacing:0.112px;">5s</div>
<div class="t" style="left:746.4px;width:300px;text-align:center;top:299.00px;font-size:12px;line-height:18px;color:#000;white-space:nowrap;">1</div>
<div class="t" style="left:834.6px;width:300px;text-align:center;top:299.00px;font-size:12px;line-height:18px;color:#000;white-space:nowrap;">2</div>
<div class="t" style="left:971.5px;width:300px;text-align:center;top:299.00px;font-size:12px;line-height:18px;color:#000;white-space:nowrap;">3</div>
<div class="t" style="left:1109.2px;width:300px;text-align:center;top:299.00px;font-size:12px;line-height:18px;color:#000;white-space:nowrap;">4</div>
<div style="left:807px;top:363px;width:779px;height:5px;background:#f0f0f0;"></div>
<div style="left:807px;top:391px;width:777px;height:272px;background:#fff;border:1px solid #d9d9d9;"></div>
<div style="left:873px;top:370px;width:79px;height:22px;background:#f0f0f0;border:1px solid #d9d9d9;"></div>
<div style="left:951px;top:370px;width:83px;height:22px;background:#f0f0f0;border:1px solid #d9d9d9;"></div>
<div style="left:807px;top:368px;width:67px;height:24px;background:#fff;border:1px solid #d9d9d9;border-bottom:none;"></div>
<div class="t" style="left:822.2px;top:372.00px;font-size:12.32px;line-height:18px;color:#000;white-space:nowrap;letter-spacing:-0.22px;">Basics</div>
<div class="t" style="left:887.2px;top:372.00px;font-size:12.9px;line-height:19px;color:#8c8c8c;white-space:nowrap;letter-spacing:-0.22px;">Actuated</div>
<div class="t" style="left:967.5px;top:372.00px;font-size:13.0px;line-height:19px;color:#8c8c8c;white-space:nowrap;letter-spacing:-0.22px;">Detectors</div>
<div style="left:818px;top:405px;width:16px;height:16px;background:#fff;border:1px solid #333;"></div>
<div class="t" style="left:840.7px;top:404.00px;font-size:13.16px;line-height:19px;color:#000;white-space:nowrap;letter-spacing:-0.22px;">Interphase</div>
<div class="t" style="left:925.2px;top:404.00px;font-size:13.5px;line-height:19px;color:#000;white-space:nowrap;letter-spacing:-0.22px;">Yellow Time (Green to Red):</div>
<div style="left:1095px;top:402px;width:151px;height:22px;background:#fff;border:1px solid #767676;"></div>
<div class="t" style="left:1098.3px;top:404.00px;font-size:12.79px;line-height:19px;color:#000;white-space:nowrap;letter-spacing:-0.22px;">Use Node Value</div>
<div style="left:1230px;top:404px;width:14px;height:18px;background:#f0f0f0;border:1px solid #c3c3c3;"></div>
<div style="left:1230px;top:412.5px;width:14px;height:1px;background:#c3c3c3;"></div>
<svg style="left:1232.6px;top:406.3px;" width="8" height="5" viewBox="0 0 8 5"><path d="M0.2,4.4 L4,0.3 L7.8,4.4 Z" fill="#000"/></svg>
<svg style="left:1232.6px;top:415.6px;" width="8" height="5" viewBox="0 0 8 5"><path d="M0.2,0.4 L4,4.5 L7.8,0.4 Z" fill="#000"/></svg>
<div class="t" style="left:1252px;top:404.00px;font-size:13.5px;line-height:19px;color:#000;white-space:nowrap;letter-spacing:-0.22px;">Yellow Time (Red to Green):</div>
<div style="left:1422px;top:402px;width:151px;height:22px;background:#fff;border:1px solid #767676;"></div>
<div class="t" style="left:1425.1px;top:404.00px;font-size:12.85px;line-height:19px;color:#000;white-space:nowrap;letter-spacing:-0.22px;">Use Node Value</div>
<div style="left:1557px;top:404px;width:14px;height:18px;background:#f0f0f0;border:1px solid #c3c3c3;"></div>
<div style="left:1557px;top:412.5px;width:14px;height:1px;background:#c3c3c3;"></div>
<svg style="left:1559.6px;top:406.3px;" width="8" height="5" viewBox="0 0 8 5"><path d="M0.2,4.4 L4,0.3 L7.8,4.4 Z" fill="#000"/></svg>
<svg style="left:1559.6px;top:415.6px;" width="8" height="5" viewBox="0 0 8 5"><path d="M0.2,0.4 L4,4.5 L7.8,0.4 Z" fill="#000"/></svg>
<div class="t" style="left:925.2px;top:432.00px;font-size:13.27px;line-height:19px;color:#000;white-space:nowrap;letter-spacing:-0.22px;">Minimum Duration:</div>
<div style="left:1095px;top:430px;width:151px;height:22px;background:#fff;border:1px solid #767676;"></div>
<div class="t" style="left:1098.3px;top:432.00px;font-size:13.06px;line-height:19px;color:#000;white-space:nowrap;letter-spacing:-0.22px;">30.00 sec</div>
<div style="left:1230px;top:432px;width:14px;height:18px;background:#f0f0f0;border:1px solid #c3c3c3;"></div>
<div style="left:1230px;top:440.5px;width:14px;height:1px;background:#c3c3c3;"></div>
<svg style="left:1232.6px;top:434.3px;" width="8" height="5" viewBox="0 0 8 5"><path d="M0.2,4.4 L4,0.3 L7.8,4.4 Z" fill="#000"/></svg>
<svg style="left:1232.6px;top:443.6px;" width="8" height="5" viewBox="0 0 8 5"><path d="M0.2,0.4 L4,4.5 L7.8,0.4 Z" fill="#000"/></svg>
<div style="left:818px;top:458px;width:755px;height:193px;background:#fff;border:1px solid #828790;"></div>
<div style="left:819px;top:488.5px;width:753px;height:1px;background:#d9d9d9;"></div>
<div style="left:1069px;top:459px;width:1px;height:89px;background:#d9d9d9;"></div>
<div style="left:1320px;top:459px;width:1px;height:89px;background:#d9d9d9;"></div>
<div style="left:819px;top:518px;width:753px;height:1px;background:#d9d9d9;"></div>
<div style="left:819px;top:548px;width:753px;height:1px;background:#d9d9d9;"></div>
<div class="t" style="left:923.4px;top:465.00px;font-size:14.19px;line-height:20px;color:#000;white-space:nowrap;font-weight:bold;letter-spacing:-0.22px;">Signal</div>
<div class="t" style="left:1131.3px;top:465.00px;font-size:14.5px;line-height:20px;color:#000;white-space:nowrap;font-weight:bold;letter-spacing:-0.146px;">Assigned to Phase</div>
<div class="t" style="left:1417.2px;top:465.00px;font-size:14.38px;line-height:20px;color:#000;white-space:nowrap;font-weight:bold;letter-spacing:-0.22px;">Flashing</div>
<div style="left:819px;top:489px;width:249px;height:29px;background:#0078d7;outline:1px dotted #e6a15a;outline-offset:-1px;"></div>
<div style="left:1070px;top:489px;width:250px;height:29px;background:#0078d7;"></div>
<div class="t" style="left:822.2px;top:494.00px;font-size:14.76px;line-height:20px;color:#fff;white-space:nowrap;letter-spacing:-0.22px;">Signal 1</div>
<div class="t" style="left:822.2px;top:524.00px;font-size:14.9px;line-height:20px;color:#000;white-space:nowrap;letter-spacing:-0.22px;">Signal 3</div>
<div style="left:1073px;top:495px;width:16px;height:16px;background:#fff;border:1px solid #333;"></div>
<svg style="left:1073px;top:495px;" width="16" height="16" viewBox="0 0 16 16"><path d="M3.2,8.2 L6.6,11.4 L12.8,4.4" fill="none" stroke="#222" stroke-width="1.2"/></svg>
<div style="left:1073px;top:525px;width:16px;height:16px;background:#fff;border:1px solid #333;"></div>
<div style="left:1321px;top:489px;width:250px;height:29px;background:#e1e1e1;border:1px solid #adadad;"></div>
<div class="t" style="left:1325.5px;top:494.00px;font-size:15.26px;line-height:21px;color:#000;white-space:nowrap;letter-spacing:-0.22px;">No</div>
<svg style="left:1554.6px;top:500.20000000000005px;" width="10" height="6" viewBox="0 0 10 6"><path d="M0.4,0.5 L4.7,4.9 L9,0.5" fill="none" stroke="#444" stroke-width="1.1"/></svg>
<div style="left:1321px;top:519px;width:250px;height:29px;background:#cccccc;border:1px solid #bfbfbf;"></div>
<div class="t" style="left:1325.5px;top:524.00px;font-size:15.26px;line-height:21px;color:#8f8f8f;white-space:nowrap;letter-spacing:-0.22px;">No</div>
<svg style="left:1554.6px;top:530.2px;" width="10" height="6" viewBox="0 0 10 6"><path d="M0.4,0.5 L4.7,4.9 L9,0.5" fill="none" stroke="#b5b5b5" stroke-width="1.1"/></svg>
<div style="left:787px;top:692px;width:821px;height:1px;background:#a0a0a0;"></div>
<div style="left:787px;top:693px;width:821px;height:1px;background:#fff;"></div>
<div style="left:788px;top:702px;width:91px;height:26px;background:#e1e1e1;border:1px solid #adadad;"></div>
<div class="t" style="left:821.1px;top:707.00px;font-size:12.28px;line-height:18px;color:#000;white-space:nowrap;letter-spacing:-0.22px;">Help</div>
<div style="left:1417px;top:702px;width:91px;height:26px;background:#e1e1e1;border:2px solid #0078d7;"></div>
<div class="t" style="left:1440.1px;top:706.00px;font-size:13px;line-height:19px;color:#000;white-space:nowrap;letter-spacing:-0.169px;">Aceptar</div>
<div style="left:1516px;top:702px;width:91px;height:26px;background:#e1e1e1;border:1px solid #adadad;"></div>
<div class="t" style="left:1536.4px;top:707.00px;font-size:12.68px;line-height:18px;color:#000;white-space:nowrap;letter-spacing:-0.22px;">Cancelar</div>
</div>
</body></html>
